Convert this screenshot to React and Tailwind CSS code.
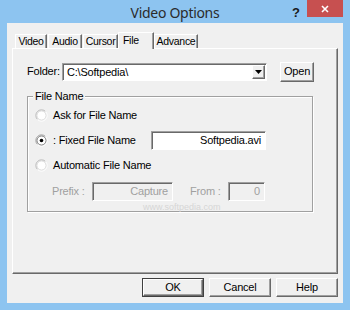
const ui = { fontFamily: '"Liberation Sans", Arial, sans-serif' };

const raised = "border border-t-white border-l-white border-b-[#696969] border-r-[#696969] shadow-[inset_-1px_-1px_0_#a0a0a0]";
const sunken = "border border-t-[#a0a0a0] border-l-[#a0a0a0] border-b-white border-r-white shadow-[inset_1px_1px_0_#696969]";

function Radio({ checked, dim }) {
  return (
    <svg width="13" height="13" viewBox="0 0 13 13" className="shrink-0">
      <path d="M2.5 10.5 A5.5 5.5 0 0 1 10.5 2.5" fill="none" stroke={dim ? "#b8b8b8" : "#a0a0a0"} />
      <path d="M10.5 2.5 A5.5 5.5 0 0 1 2.5 10.5" fill="none" stroke="#ffffff" />
      <circle cx="6.5" cy="6.5" r="4.5" fill="#fff" stroke={dim ? "#d8d8d8" : "#696969"} strokeWidth="0.8" />
      {checked && <circle cx="6.5" cy="6.5" r="1.8" fill="#000" />}
    </svg>
  );
}

function Tab({ label, active, w }) {
  if (active)
    return (
      <div className={`relative z-10 -mb-px h-[17px] bg-[#f0f0f0] border-l border-t border-white border-r border-r-[#696969] shadow-[inset_-1px_0_0_#a0a0a0] pl-[4px] pt-[1px] leading-[13px] whitespace-nowrap ${w}`}>
        {label}
      </div>
    );
  return (
    <div className={`h-[14px] border-l border-t border-white border-r border-r-[#696969] shadow-[inset_-1px_0_0_#a0a0a0] flex justify-center leading-[13px] whitespace-nowrap ${w}`}>
      {label}
    </div>
  );
}

export default function App() {
  return (
    <div style={ui} className="w-[350px] h-[310px] bg-[#8dc4f0] flex flex-col text-[11px] tracking-[-0.2px] text-black overflow-hidden">
      {/* title bar */}
      <div className="relative h-[23px] flex items-center justify-center">
        <span style={{ fontFamily: '"Noto Sans", "Open Sans", sans-serif' }} className="text-[14px] tracking-[-0.3px] text-[#2b2b2b] pt-[2px]">Video Options</span>
        <span className="absolute left-[292px] top-[3px] text-[13px] font-bold text-[#1a1a1a]">?</span>
        <div className="absolute left-[307px] top-0 w-[36px] h-[17px] bg-[#c75050] flex items-center justify-center">
          <svg width="8" height="8" viewBox="0 0 8 8"><path d="M1 1 L7 7 M7 1 L1 7" stroke="#fff" strokeWidth="1.6" /></svg>
        </div>
      </div>

      {/* client area */}
      <div className="mx-[7px] h-[280px] bg-[#f0f0f0] flex flex-col">
        <div className="flex items-end ml-[8px] mt-[9px] h-[16px] text-[10.5px] tracking-[-0.3px]">
          <Tab label="Video" w="w-[32px]" />
          <div className="w-[1px]" />
          <Tab label="Audio" w="w-[34px]" />
          <div className="w-[1px]" />
          <Tab label="Cursor" w="w-[35px]" />
          <Tab label="File" active w="w-[36px]" />
          <Tab label="Advance" w="w-[44px]" />
        </div>

        <div className="ml-[5px] w-[326px] h-[226px] border border-t-white border-l-white border-b-[#696969] border-r-[#696969] shadow-[inset_-1px_-1px_0_#a0a0a0] flex flex-col">
          <div className="flex items-center mt-[13px] h-[19px]">
            <span className="ml-[14px] w-[35px]">Folder:</span>
            <div className={`${sunken} w-[205px] h-[18px] bg-white flex items-center`}>
              <span className="flex-1 pl-[4px] leading-[14px]">C:\Softpedia\</span>
              <div className={`${raised} w-[13px] h-[14px] mr-[1px] bg-[#f0f0f0] flex items-center justify-center`}>
                <svg width="7" height="4" viewBox="0 0 7 4"><path d="M0 0 H7 L3.5 4 Z" fill="#000" /></svg>
              </div>
            </div>
            <div className={`${raised} ml-[13px] w-[34px] h-[20px] bg-[#f0f0f0] flex items-center justify-center`}>Open</div>
          </div>

          <div className="relative ml-[14px] mt-[15px] w-[286px] h-[116px] border border-[#a0a0a0] shadow-[inset_1px_1px_0_#fff,1px_1px_0_#fff] flex flex-col">
            <span className="absolute left-[5px] -top-[8px] px-[2px] bg-[#f0f0f0] leading-[14px]">File Name</span>
            <div className="flex items-center gap-[5px] ml-[7px] mt-[10px] h-[16px]">
              <Radio dim />
              <span>Ask for File Name</span>
            </div>
            <div className="flex items-center mt-[8px] h-[18px]">
              <div className="ml-[7px]"><Radio checked /></div>
              <span className="ml-[5px] w-[83px] overflow-hidden whitespace-nowrap">: Fixed File Name</span>
              <div className={`${sunken} ml-[15px] w-[115px] h-[19px] bg-white flex items-center justify-end pr-[4px]`}>Softpedia.avi</div>
            </div>
            <div className="flex items-center gap-[5px] ml-[7px] mt-[8px] h-[16px]">
              <Radio dim />
              <span>Automatic File Name</span>
            </div>
            <div className="flex items-center mt-[9px] h-[18px] text-[#a0a0a0]">
              <span className="ml-[24px] w-[40px]">Prefix :</span>
              <div className={`${sunken} w-[81px] h-[19px] bg-[#f0f0f0] flex items-center justify-end pr-[4px]`}>Capture</div>
              <span className="ml-[17px] w-[38px]">From :</span>
              <div className={`${sunken} w-[37px] h-[19px] bg-[#f0f0f0] flex items-center justify-end pr-[4px]`}>0</div>
            </div>
            <div className="absolute left-[115px] top-[104px] text-[9px] tracking-normal text-[#d6d6d6] pointer-events-none">www.softpedia.com</div>
          </div>
        </div>

        <div className="flex justify-end gap-[5px] mt-[4px] mr-[5px]">
          <div className="w-[62px] h-[19px] border border-[#404040] bg-[#f0f0f0] flex">
            <div className={`${raised} flex-1 flex items-center justify-center`}>OK</div>
          </div>
          <div className={`${raised} w-[62px] h-[19px] bg-[#f0f0f0] flex items-center justify-center`}>Cancel</div>
          <div className={`${raised} w-[62px] h-[19px] bg-[#f0f0f0] flex items-center justify-center`}>Help</div>
        </div>
      </div>
    </div>
  );
}
